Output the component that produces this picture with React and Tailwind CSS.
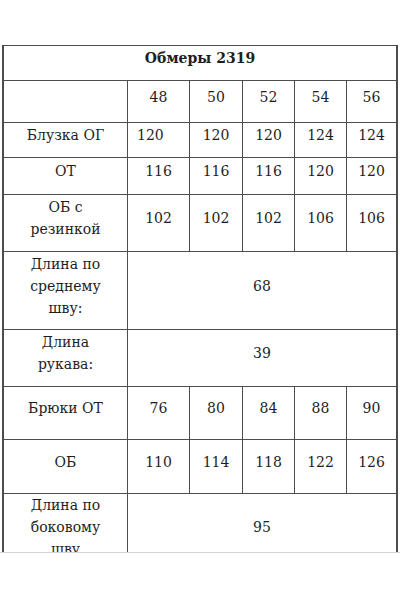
const sizes = ['48', '50', '52', '54', '56'];

const rows = [
  { label: 'Блузка ОГ', values: ['120', '120', '120', '124', '124'], h: 'h-[35px]', leftFirst: true },
  { label: 'ОТ', values: ['116', '116', '116', '120', '120'], h: 'h-[37px]' },
  { label: ['ОБ с', 'резинкой'], values: ['102', '102', '102', '106', '106'], h: 'h-[57px]' },
  { label: ['Длина по', 'среднему', 'шву:'], span: '68', h: 'h-[78px]' },
  { label: ['Длина', 'рукава:'], span: '39', h: 'h-[57px]' },
  { label: 'Брюки ОТ', values: ['76', '80', '84', '88', '90'], h: 'h-[53px]' },
  { label: 'ОБ', values: ['110', '114', '118', '122', '126'], h: 'h-[54px]' },
  { label: ['Длина по', 'боковому', 'шву'], span: '95', h: 'h-[76px]' },
];

function Cell({ children, className = '', last }) {
  return (
    <div
      className={`flex items-center justify-center pb-[10px] border-b border-[#4d4d4d] text-center ${
        last ? 'border-r-2' : 'border-r'
      } ${className}`}
    >
      {children}
    </div>
  );
}

export default function App() {
  return (
    <div
      className="w-[400px] h-[600px] bg-white text-[#1e1e1e] text-[14px] leading-[22px]"
      style={{ fontFamily: '"DejaVu Serif", serif' }}
    >
      <div className="h-[553px] overflow-hidden border-b border-[#d4d4d4] pt-[45px]">
        <div className="ml-[2px] w-[396px] border-t border-l-2 border-[#4d4d4d] grid grid-cols-[124px_62px_53px_52px_52px_51px]">
          <Cell last className="col-span-6 h-[35px] font-bold">
            Обмеры 2319
          </Cell>

          <Cell className="h-[42px]" />
          {sizes.map((s, i) => (
            <Cell key={s} last={i === 4} className="h-[42px]">
              {s}
            </Cell>
          ))}

          {rows.map((r) => {
            const label = Array.isArray(r.label) ? r.label : [r.label];
            return [
              <Cell key={label.join() + 'l'} className={r.h}>
                <div>
                  {label.map((t) => (
                    <div key={t}>{t}</div>
                  ))}
                </div>
              </Cell>,
              r.span ? (
                <Cell key={label.join() + 's'} last className={`col-span-5 ${r.h}`}>
                  {r.span}
                </Cell>
              ) : (
                r.values.map((v, i) => (
                  <Cell
                    key={label.join() + i}
                    last={i === 4}
                    className={`${r.h} ${r.leftFirst && i === 0 ? 'justify-start pl-[9px]' : ''}`}
                  >
                    {v}
                  </Cell>
                ))
              ),
            ];
          })}
        </div>
      </div>
    </div>
  );
}
